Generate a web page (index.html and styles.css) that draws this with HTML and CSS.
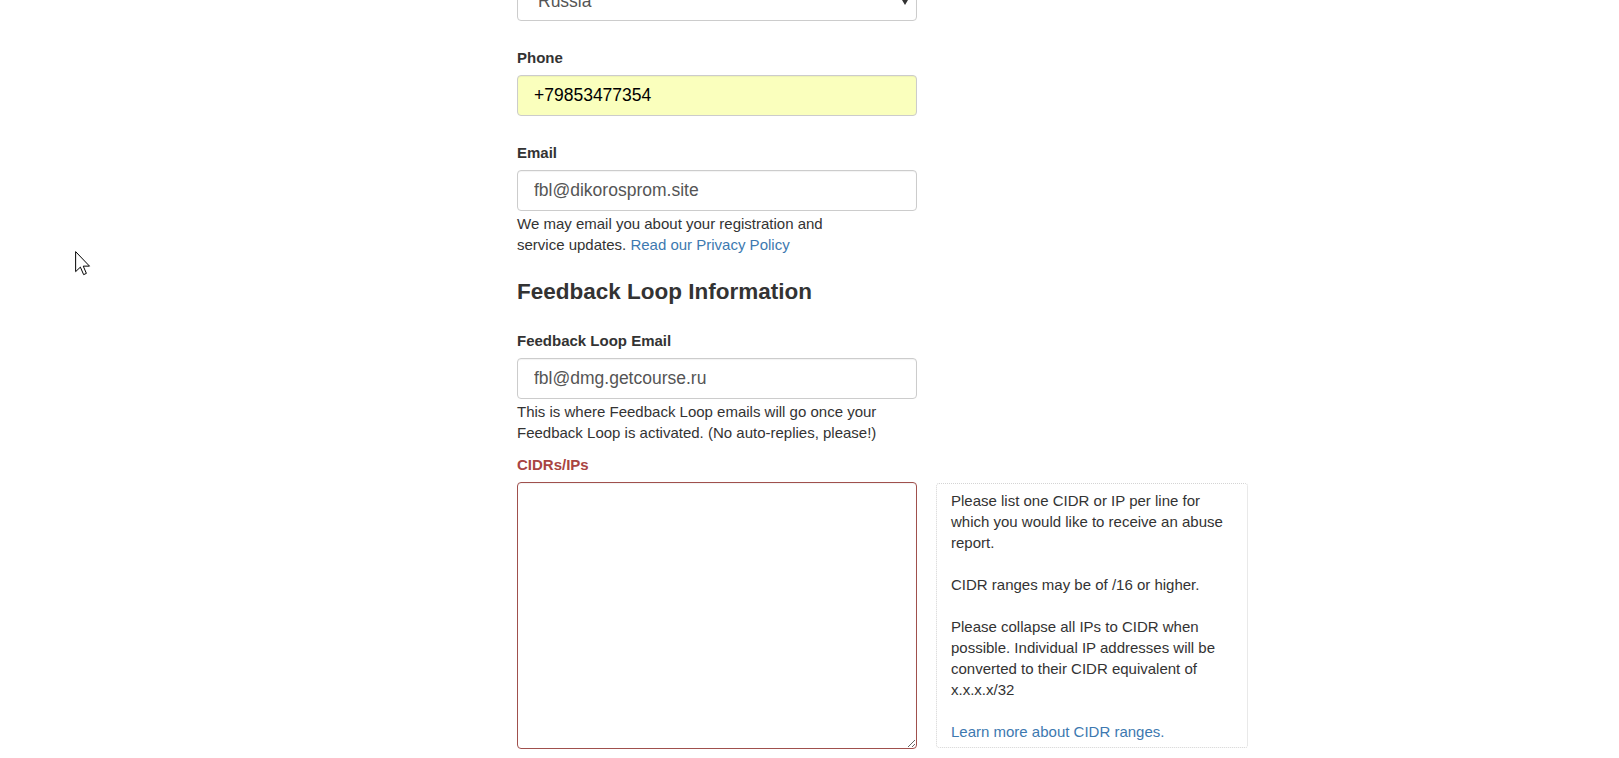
FILE: index.html
```html
<!DOCTYPE html>
<html>
<head>
<meta charset="utf-8">
<title>Feedback Loop</title>
<link rel="stylesheet" href="styles.css">
</head>
<body>
<div class="page">
  <form class="form">
    <div class="select-wrap">
      <select class="control select"><option>Russia</option></select>
      <span class="caret"></span>
    </div>

    <div class="group">
      <label class="label">Phone</label>
      <input class="control autofill" type="text" value="+79853477354">
    </div>

    <div class="group">
      <label class="label">Email</label>
      <input class="control" type="text" value="fbl@dikorosprom.site">
      <p class="help help-narrow">We may email you about your registration and service updates. <a href="#" class="link">Read our Privacy Policy</a></p>
    </div>

    <h3 class="heading">Feedback Loop Information</h3>

    <div class="group group-tight">
      <label class="label">Feedback Loop Email</label>
      <input class="control" type="text" value="fbl@dmg.getcourse.ru">
      <p class="help">This is where Feedback Loop emails will go once your Feedback Loop is activated. (No auto-replies, please!)</p>
    </div>

    <div class="group group-cidr">
      <label class="label label-error">CIDRs/IPs</label>
      <div class="cidr-row">
        <textarea class="control area"></textarea>
        <div class="note">
          Please list one CIDR or IP per line for which you would like to receive an abuse report.<br><br>CIDR ranges may be of /16 or higher.<br><br>Please collapse all IPs to CIDR when possible. Individual IP addresses will be converted to their CIDR equivalent of x.x.x.x/32<br><br><a href="#" class="link">Learn more about CIDR ranges.</a>
        </div>
      </div>
    </div>
  </form>
</div>

<svg class="cursor" width="16" height="26" viewBox="0 0 12.8 20.8" xmlns="http://www.w3.org/2000/svg">
  <path d="M0.5 0.5 L0.5 16.5 L4.3 12.9 L6.9 18.9 L9.1 17.9 L6.6 12.1 L11.6 12.1 Z" fill="#fff" stroke="#000" stroke-width="0.8" stroke-linejoin="miter"/>
</svg>
</body>
</html>
```

FILE: styles.css
```css
html, body {
  margin: 0;
  padding: 0;
  background: #fff;
}

body {
  font-family: "Liberation Sans", Arial, sans-serif;
  font-size: 15px;
  line-height: 21px;
  color: #333;
  overflow: hidden;
}

.page {
  padding-left: 517px;
}

.form {
  width: 400px;
  margin: 0;
}

.select-wrap {
  position: relative;
  margin-top: -20px;
}

.control {
  display: block;
  box-sizing: border-box;
  width: 100%;
  height: 41px;
  margin: 0;
  padding: 0 16px;
  font-family: "Liberation Sans", Arial, sans-serif;
  font-size: 17.5px;
  color: #555;
  background: #fff;
  border: 1px solid #ccc;
  border-radius: 4px;
  box-shadow: inset 0 1px 1px rgba(0, 0, 0, 0.05);
  outline: none;
}

.select {
  -webkit-appearance: none;
  appearance: none;
  padding-left: 20px;
}

.caret {
  position: absolute;
  right: 9px;
  top: 20px;
  width: 0;
  height: 0;
  border-left: 3px solid transparent;
  border-right: 3px solid transparent;
  border-top: 5px solid #333;
}

.autofill {
  background: #faffbd;
  color: #000;
}

.group {
  margin-top: 26px;
}

.group-tight {
  margin-top: 26px;
}

.group-cidr {
  margin-top: 11px;
}

.label {
  display: block;
  font-weight: bold;
  margin-bottom: 7px;
  color: #333;
}

.label-error {
  color: #a94442;
}

.help {
  margin: 2px 0 0;
  color: #333;
}

.help-narrow {
  width: 310px;
}

.link {
  color: #3d79b0;
  text-decoration: none;
}

.heading {
  margin: 24px 0 0;
  font-size: 22.5px;
  line-height: 25px;
  font-weight: bold;
  color: #333;
}

.cidr-row {
  display: flex;
  align-items: flex-start;
  width: 712px;
}

.area {
  flex: 0 0 400px;
  height: 267px;
  padding: 6px 12px;
  border-color: #a0504d;
  resize: vertical;
}

.note {
  box-sizing: border-box;
  flex: 0 0 312px;
  height: 265px;
  margin: 1px 0 0 19px;
  padding: 6px 14px 5px 14px;
  border: 1px dotted #d4d4d4;
  border-radius: 3px;
  color: #333;
}

.cursor {
  position: absolute;
  left: 75px;
  top: 251px;
}
```
